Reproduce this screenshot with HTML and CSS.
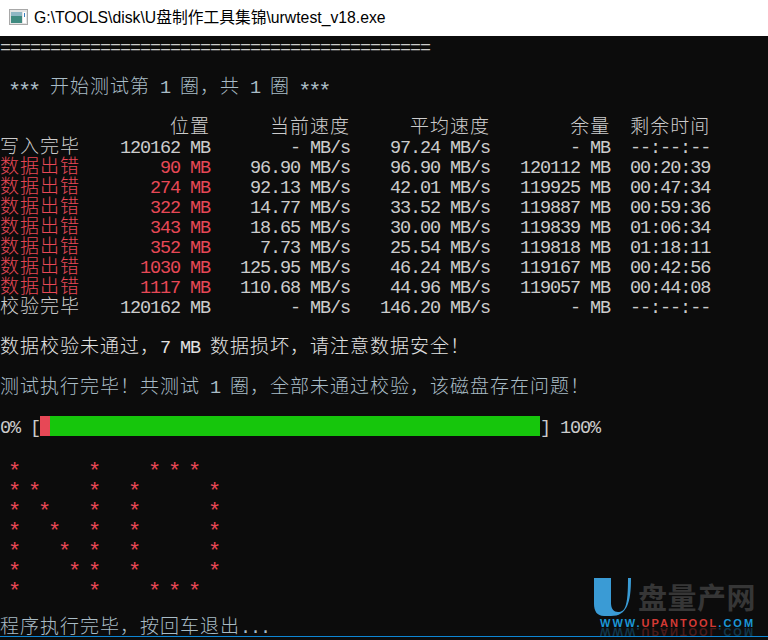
FILE: index.html
```html
<!DOCTYPE html>
<html lang="zh-CN">
<head>
<meta charset="utf-8">
<title>urwtest_v18.exe</title>
<link rel="stylesheet" href="styles.css">
</head>
<body>
<div class="window">
  <header class="titlebar">
    <svg class="appicon" width="19" height="16" viewBox="0 0 19 16">
      <rect x="0.5" y="0.5" width="18" height="15" fill="#e4e4e4" stroke="#a8a8a8"/>
      <rect x="2" y="3" width="11" height="11" fill="#3f8a80"/>
      <rect x="2" y="3" width="11" height="4" fill="#8fb7c4"/>
      <rect x="14" y="3" width="3" height="11" fill="#fff"/>
      <rect x="15" y="4" width="1" height="4" fill="#3a7fc0"/>
    </svg>
    <span class="title">G:\TOOLS\disk\U盘制作工具集锦\urwtest_v18.exe</span>
  </header>
  <main class="console">
<pre class="screen"><div class="ln">===========================================</div><div class="ln"></div><div class="ln dim"> <span class="star">***</span> <i>开始测试第</i> 1 <i>圈，共</i> 1 <i>圈</i> <span class="star">***</span></div><div class="ln"></div><div class="ln">                 <i>位置</i>      <i>当前速度</i>      <i>平均速度</i>        <i>余量</i>  <i>剩余时间</i></div><div class="ln"><i>写入完毕</i>    120162 MB        - MB/s    97.24 MB/s        - MB  --:--:--</div><div class="ln"><b><i>数据出错</i>        90 MB</b>    96.90 MB/s    96.90 MB/s   120112 MB  00:20:39</div><div class="ln"><b><i>数据出错</i>       274 MB</b>    92.13 MB/s    42.01 MB/s   119925 MB  00:47:34</div><div class="ln"><b><i>数据出错</i>       322 MB</b>    14.77 MB/s    33.52 MB/s   119887 MB  00:59:36</div><div class="ln"><b><i>数据出错</i>       343 MB</b>    18.65 MB/s    30.00 MB/s   119839 MB  01:06:34</div><div class="ln"><b><i>数据出错</i>       352 MB</b>     7.73 MB/s    25.54 MB/s   119818 MB  01:18:11</div><div class="ln"><b><i>数据出错</i>      1030 MB</b>   125.95 MB/s    46.24 MB/s   119167 MB  00:42:56</div><div class="ln"><b><i>数据出错</i>      1117 MB</b>   110.68 MB/s    44.96 MB/s   119057 MB  00:44:08</div><div class="ln"><i>校验完毕</i>    120162 MB        - MB/s   146.20 MB/s        - MB  --:--:--</div><div class="ln"></div><div class="ln bright"><i>数据校验未通过，</i>7 MB <i>数据损坏，请注意数据安全！</i></div><div class="ln"></div><div class="ln dim"><i>测试执行完毕！共测试</i> 1 <i>圈，全部未通过校验，该磁盘存在问题！</i></div><div class="ln"></div><div class="ln">0% [<span class="bar"><span class="bar-bad"></span><span class="bar-good"></span></span>] 100%</div><div class="ln"></div><div class="ln err"><span class="star"> *       *     * * *</span></div><div class="ln err"><span class="star"> * *     *   *       *</span></div><div class="ln err"><span class="star"> *  *    *   *       *</span></div><div class="ln err"><span class="star"> *   *   *   *       *</span></div><div class="ln err"><span class="star"> *    *  *   *       *</span></div><div class="ln err"><span class="star"> *     * *   *       *</span></div><div class="ln err"><span class="star"> *       *     * * *</span></div><div class="ln"></div><div class="ln dim"><i>程序执行完毕，按回车退出</i>...</div></pre>
    <div class="rule"></div>
    <aside class="logo">
      <svg class="logo-u" width="38" height="40" viewBox="0 0 38 40">
        <path d="M0 1H17V26C17 32 20 35 24 35C31 35 34 30 34 1H37C37 26 33 39 17 39H10C3 39 0 34 0 27Z" fill="#3a9bd5"/>
      </svg>
      <span class="logo-cn">盘量产网</span>
      <span class="logo-url">WWW<em>.</em><strong>UPANTOOL</strong><em>.</em>COM</span>
      <span class="logo-url logo-mirror" aria-hidden="true">WWW<em>.</em><strong>UPANTOOL</strong><em>.</em>COM</span>
    </aside>
  </main>
</div>
</body>
</html>
```
FILE: styles.css
```css
* { box-sizing: border-box; }
html, body { margin: 0; padding: 0; background: #0c0c0c; }
.window { width: 768px; height: 640px; display: flex; flex-direction: column; overflow: hidden; }
.titlebar {
  height: 36px; flex: none; background: #fff; display: flex; align-items: center;
  gap: 6px; padding: 0 0 3px 9px; color: #000;
  font-family: "Liberation Sans", "Noto Sans CJK SC", sans-serif; font-size: 15.75px;
}
.appicon { flex: none; }
.console { position: relative; flex: 1; background: #0c0c0c; }
.screen {
  margin: 0; color: #cccccc;
  font-family: "Liberation Mono", "Noto Sans CJK SC", monospace;
  font-size: 18.5px; letter-spacing: -1.1px; line-height: 20px;
}
.ln { height: 20px; padding-top: 3px; white-space: pre; }
.ln i {
  font-style: normal; font-family: "Noto Sans CJK SC", sans-serif; font-weight: 300;
  font-size: 19px; letter-spacing: 1px; line-height: 0;
}
.ln b { font-weight: normal; color: #e74856; }
.dim { color: #a9bcc6; }
.bright { color: #e2e2e2; }
.err { color: #e74856; margin-left: -2px; }
.star { font-size: 22px; letter-spacing: -3.2px; line-height: 0; vertical-align: -5px; }
.dim .star { margin-left: -2px; margin-right: 2px; }
.bar { display: inline-flex; width: 500px; height: 20px; margin-top: -3px; vertical-align: top; }
.bar-bad { width: 10px; background: #e74856; }
.bar-good { flex: 1; background: #16c60c; }
.rule { height: 1px; background: #0e86d4; }
.logo { position: absolute; left: 594px; top: 541px; width: 170px; height: 59px; }
.logo-u { position: absolute; left: 0; top: 0; }
.logo-cn {
  position: absolute; left: 44px; top: 3px; font-family: "Noto Sans CJK SC", sans-serif;
  font-weight: 700; font-size: 29px; line-height: 32px; color: #363636; white-space: nowrap; letter-spacing: 0.5px;
}
.logo-url {
  position: absolute; left: 6px; top: 41px; white-space: nowrap; line-height: 10px;
  font-family: "Liberation Sans", sans-serif; font-weight: 700; font-size: 11px; letter-spacing: 2px; color: #1b97d6;
}
.logo-url em { font-style: normal; color: #1b97d6; }
.logo-url strong { color: #d43a35; font-weight: 700; }
.logo-mirror { top: 50px; transform: scaleY(-1); opacity: 0.3; }
```
